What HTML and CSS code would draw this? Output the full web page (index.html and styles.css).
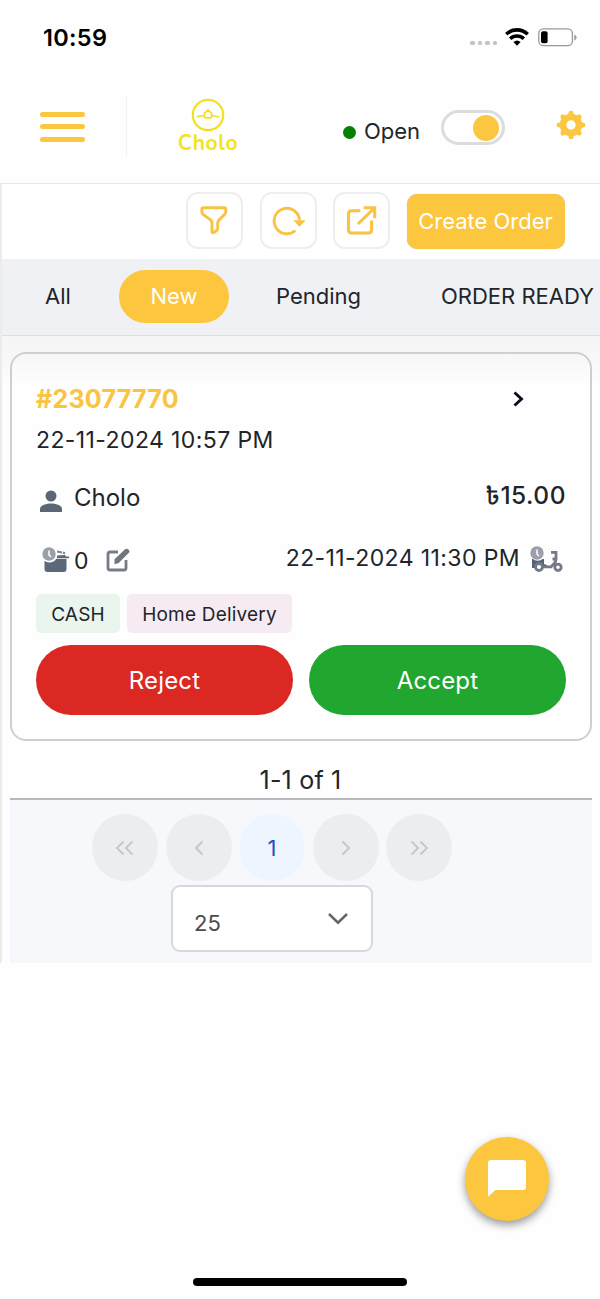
FILE: index.html
```html
<!DOCTYPE html>
<html lang="en">
<head>
<meta charset="utf-8">
<title>Cholo orders</title>
<link rel="stylesheet" href="styles.css">
</head>
<body>
<div class="statusbar">
  <span class="clock">10:59</span>
  <span class="cell"><i></i><i></i><i></i><i></i></span>
  <svg class="wifi" width="24" height="18" viewBox="0 0 24 18"><g fill="none" stroke="#000" stroke-width="3.6"><path d="M1.300 6.200a15.500 15.500 0 0 1 21.400 0"/><path d="M5.200 10.700a9.800 9.800 0 0 1 13.600 0"/></g><path d="M8.400 14a5.400 5.400 0 0 1 7.200 0L12 17.700z"/></svg>
  <svg class="battery" width="40" height="19" viewBox="0 0 40 19"><rect x=".8" y=".8" width="33.600" height="16.800" rx="4.600" fill="none" stroke="#999" stroke-width="1.300"/><rect x="3" y="3.200" width="6.600" height="12" rx="2"/><path d="M36.300 6.400q2.300.8 2.300 3t-2.300 3z" fill="#999"/></svg>
</div>
<header class="header">
  <div class="burger"><i></i><i></i><i></i></div>
  <div class="divider"></div>
  <div class="logo">
    <svg width="34" height="34" viewBox="0 0 34 34" fill="none" stroke="#f0e020" stroke-width="2.200"><circle cx="17" cy="17" r="15.200"/><path d="M6 19q3-1.800 7.200-1.100M20.800 17.900q3.800-.5 7.400 1.400" stroke-width="1.600"/><path d="M13.500 15.100l3.500-3.200 3.500 3.200v3.700q0 1-1 1h-5q-1 0-1-1z" stroke-width="1.700"/></svg>
    <span>Cholo</span>
  </div>
  <div class="state"><i></i><span>Open</span></div>
  <div class="toggle"><i></i></div>
  <svg class="gear" width="30" height="30" viewBox="0 0 30 30" fill="none" stroke="#fbc640"><circle cx="15" cy="15" r="8" stroke-width="6.600"/><path stroke-width="5" stroke-linecap="round" stroke-linejoin="round" d="M15 3.200v2M15 24.800v2M3.200 15h2M24.800 15h2M6.900 6.900l1.400 1.400M21.700 21.700l1.400 1.400M6.900 23.100l1.400-1.400M21.700 8.300l1.400-1.400"/></svg>
</header>
<main class="main">
  <div class="toolbar">
    <button class="tool"><svg width="32" height="32" viewBox="0 0 32 32" fill="none" stroke="#f9c242" stroke-width="2.900" stroke-linejoin="round"><path d="M5.300 2.800h21q1.500 0 1.500 1.500v3q0 1-1 2l-5.700 5.600q-1.400 1.400-1.400 3.200v5.500q0 1.200-1 1.900l-3 2q-1.700 1-1.700-1v-8.400q0-1.800-1.400-3.200L4.900 9.300q-1-1-1-2v-3q0-1.500 1.400-1.500z"/></svg></button>
    <button class="tool"><svg width="34" height="32" viewBox="0 0 34 32"><path d="M24.300 25.500A12.700 12.700 0 1 1 28.500 15" fill="none" stroke="#f9c242" stroke-width="2.800"/><path d="M22.200 15.200h12.600l-6.300 6.500z" fill="#f9c242"/></svg></button>
    <button class="tool"><svg width="32" height="32" viewBox="0 0 32 32" fill="none" stroke="#f9c242" stroke-width="3.100"><path d="M15.300 5.700H6.700q-3.200 0-3.200 3.200v15.900q0 3.200 3.200 3.200h16.700q3.200 0 3.200-3.200V15.500M13 19L29 3.300M18.700 2.700h11v10.500"/></svg></button>
    <button class="create"><span>Create Order</span></button>
  </div>
  <nav class="tabs"><span class="tab all">All</span><span class="tab active">New</span><span class="tab pending">Pending</span><span class="tab ready">ORDER READY</span></nav>
  <section class="content">
    <article class="card">
      <div class="row title"><b>#23077770</b><svg width="12" height="18" viewBox="0 0 12 18"><path d="M1.500 2.500L8.500 9l-7 6.500" fill="none" stroke="#0c0c20" stroke-width="2.900"/></svg></div>
      <div class="date">22-11-2024 10:57 PM</div>
      <div class="row customer">
        <svg width="22" height="23" viewBox="0 0 22 23" fill="#5c6675"><circle cx="11" cy="6" r="5.500"/><path d="M0 22v-3c0-4 7-5.500 11-5.500S22 15 22 19v3z"/></svg>
        <span class="name">Cholo</span><span class="price"><span class="taka">৳</span>15.00</span>
      </div>
      <div class="row schedule">
        <svg width="28" height="26" viewBox="0 0 28 26"><path d="M2.500 12h22v10q0 3-3 3h-16q-3 0-3-3zM14 8.500l9-.5 1 1.500h3v1.700H14z" fill="#5c6878"/><path d="M15 4.500l5 1M21 5.500l2 1" stroke="#7c8592" stroke-width="2"/><circle cx="7.500" cy="7.500" r="8" fill="#fff"/><circle cx="7" cy="7" r="6.700" fill="#9aa0aa"/><path d="M7 3.500V8l2 2" fill="none" stroke="#fff" stroke-width="1.500"/></svg>
        <span class="count">0</span>
        <svg class="edit" width="24" height="24" viewBox="0 0 24 24"><path d="M12 4H4Q2 4 2 6v14q0 2 2 2h14q2 0 2-2v-8" fill="none" stroke="#767c86" stroke-width="2.800"/><path d="M8.500 16.200v-5L18.800 1.500q2-1.700 3.700 0t.1 3.600L12.700 15z" fill="#707680"/></svg>
        <span class="due">22-11-2024 11:30 PM</span>
        <svg class="scooter" width="34" height="27" viewBox="0 0 34 27"><path d="M2 13h12v5l3 1v3H2z" fill="#566171"/><g fill="none" stroke="#727987" stroke-width="2.800"><path d="M21 6.300h5v7q0 2.500-2 4.500l-3 3H14M22.500 13H26"/><circle cx="9" cy="21" r="3.500" fill="#fff"/><circle cx="28" cy="21.300" r="3.200" fill="#fff"/></g><circle cx="7.800" cy="7" r="7.800" fill="#fff"/><circle cx="7" cy="7" r="6.700" fill="#9aa0aa"/><path d="M7 3.500V8l2 2" fill="none" stroke="#fff" stroke-width="1.500"/></svg>
      </div>
      <div class="tags"><span class="tag cash">CASH</span><span class="tag home">Home Delivery</span></div>
      <div class="actions"><button class="reject">Reject</button><button class="accept">Accept</button></div>
    </article>
    <div class="range">1-1 of 1</div>
    <div class="pager">
      <div class="pages">
        <span class="page"><svg width="20" height="16" viewBox="0 0 20 16"><path d="M8.500 1.500L2 8l6.500 6.500M17.500 1.500L11 8l6.500 6.500"/></svg></span>
        <span class="page"><svg width="10" height="16" viewBox="0 0 10 16"><path d="M8.500 1.500L2 8l6.500 6.500"/></svg></span>
        <span class="page current">1</span>
        <span class="page"><svg width="10" height="16" viewBox="0 0 10 16"><path d="M1.500 1.500L8 8l-6.500 6.500"/></svg></span>
        <span class="page"><svg width="20" height="16" viewBox="0 0 20 16"><path d="M2.500 1.500L9 8l-6.500 6.500M11.500 1.500L18 8l-6.500 6.500"/></svg></span>
      </div>
      <div class="size"><span>25</span><svg width="22" height="14" viewBox="0 0 22 14"><path d="M2 2l9 8.700L20 2" fill="none" stroke="#666" stroke-width="2.500"/></svg></div>
    </div>
  </section>
</main>
<div class="chat"><svg width="38" height="37" viewBox="0 0 38 37"><path d="M3 0h32q3 0 3 3v24q0 3-3 3H7.500L0 36.800V3q0-3 3-3z" fill="#fff"/></svg></div>
<div class="homebar"></div>
</body>
</html>
```
FILE: styles.css
```css
* { box-sizing: border-box; }
body { margin: 0; width: 600px; height: 1299px; position: relative; overflow: hidden; background: #fefefe; color: #212529; font-family: Inter, "Liberation Sans", sans-serif; font-size: 22px; }
button { border: 0; padding: 0; font: inherit; display: flex; align-items: center; justify-content: center; }
svg { display: block; flex: none; }
i { display: block; }
.statusbar { height: 75px; padding-left: 43px; display: flex; align-items: center; color: #000; }
.clock { font-size: 23.500px; font-weight: 600; width: 427px; letter-spacing: .3px; }
.cell { display: flex; gap: 3px; width: 35px; padding-top: 11px; }
.cell i { width: 4.500px; height: 4.500px; border-radius: 1.500px; background: #c5c5c5; }
.wifi { margin-top: -2px; }
.battery { margin-left: 9px; }
.header { height: 109px; border-bottom: 1px solid #e6e6e6; display: flex; align-items: flex-start; padding-left: 40px; }
.burger { width: 45px; margin-top: 36.500px; display: grid; gap: 7.500px; }
.burger i { height: 5px; border-radius: 3px; background: #fbc640; }
.divider { width: 1px; height: 61px; margin: 21px 51px 0 41px; background: #f1f1f1; }
.logo { width: 60px; margin-top: 23px; display: flex; flex-direction: column; align-items: center; }
.logo span { font: 700 21px/24px "Nunito", "Noto Sans", sans-serif; color: #f2e324; letter-spacing: .6px; margin-top: -1px; }
.state { margin: 42px 0 0 105px; width: 98px; display: flex; align-items: center; gap: 8px; line-height: 28px; font-size: 22px; }
.state i { width: 13px; height: 13px; margin-top: 2px; border-radius: 50%; background: #058005; }
.toggle { width: 64px; height: 35px; margin-top: 35px; border: 3px solid #dcdcdc; border-radius: 18px; padding: 1.500px 0 0 28.500px; }
.toggle i { width: 26px; height: 26px; border-radius: 50%; background: #fbc640; }
.gear { margin: 35px 0 0 51px; }
.main { border-left: 2px solid #ececec; height: 779px; }
.toolbar { height: 75px; display: flex; align-items: flex-start; padding: 8px 0 0 184px; gap: 16.500px; background: #fff; }
.tool { width: 57px; height: 57px; background: #fff; border: 2px solid #eee; border-radius: 12px; padding-right: 1px; }
.create { width: 158px; height: 55px; margin-top: 1.500px; border-radius: 10px; background: #fcc63e; color: #fff; font-size: 22px; box-shadow: 0 0 1px #bbb; padding-bottom: 1px; }
.tabs { height: 77px; display: flex; align-items: center; padding-bottom: 3px; background: #eff1f5; border-bottom: 1px solid #dcdee1; white-space: nowrap; overflow: hidden; }
.tab { flex: none; }
.all { width: 117px; padding-left: 43px; }
.active { width: 110px; height: 53px; line-height: 53px; margin-top: 2px; text-align: center; border-radius: 27px; color: #fff; background: #fcc63e; }
.pending { width: 212px; padding-left: 47px; }
.content { padding: 16px 9px 0 8px; height: 627px; background: linear-gradient(#f5f5f5, #f8f8f8 25px, #fefefe 50px); }
.card { width: 582px; height: 389px; border: 2px solid #cfcfcf; border-radius: 16px; padding: 28px 24px 0 24px; }
.row { display: flex; align-items: center; }
.title { height: 34px; justify-content: space-between; padding-right: 41px; }
.title b { color: #fac440; font-size: 25px; font-weight: 700; letter-spacing: .25px; }
.date { line-height: 30px; margin-top: 8.500px; }
.date, .due { font-size: 23px; letter-spacing: .4px; }
.customer { height: 34px; margin-top: 25.500px; padding-left: 4px; }
.customer svg { margin-top: 8px; }
.name { margin-left: 12px; font-size: 24px; }
.price { margin-left: auto; font-size: 24.500px; font-weight: 500; margin-top: -1px; letter-spacing: .5px; }
.taka { font-family: "Noto Sans Bengali", "Noto Sans", sans-serif; }
.schedule { height: 34px; margin-top: 29px; padding-left: 6px; }
.count { margin: 2px 0 0 4px; font-size: 23px; }
.edit { margin-left: 17px; }
.due { margin-left: auto; margin-top: -5px; }
.scooter { margin: -2px 2px 0 10px; }
.tags { display: flex; gap: 7px; margin-top: 17px; font-size: 19px; letter-spacing: .2px; }
.tag { height: 39px; line-height: 41px; border-radius: 5px; text-align: center; }
.cash { width: 84px; background: #eaf5ee; }
.home { width: 165px; background: #f6ebf2; }
.actions { display: flex; gap: 16px; margin-top: 12px; width: 530px; }
.actions button { flex: 1; height: 70px; border-radius: 35px; color: #fff; font-size: 24px; letter-spacing: .15px; }
.reject { background: #dc2822; }
.accept { background: #21a62f; }
.range { height: 57px; line-height: 30px; padding-top: 24px; text-align: center; font-size: 25px; letter-spacing: .2px; }
.pager { width: 582px; height: 165px; border-top: 2px solid #b7b8bb; background: #f6f8fc; }
.pages { display: flex; gap: 7.500px; padding: 14px 0 0 82px; }
.page { width: 66px; height: 67px; border-radius: 50%; background: #ecedef; display: flex; align-items: center; justify-content: center; }
.page path { fill: none; stroke: #c8c8ca; stroke-width: 2; }
.current { background: #eff5ff; color: #2450c5; }
.size { width: 202px; height: 67px; margin: 4px 0 0 161px; border: 2px solid #d6d8dd; border-radius: 9px; background: #fff; display: flex; justify-content: space-between; padding: 20px 22px 0 21px; color: #4b4b4d; line-height: 32px; }
.size svg { margin-top: 5px; }
.chat { position: absolute; left: 465px; top: 1137px; width: 84px; height: 84px; padding-bottom: 2px; border-radius: 50%; background: #fcc63e; display: flex; align-items: center; justify-content: center; box-shadow: 0 4px 9px #0006; }
.homebar { position: absolute; left: 193px; top: 1278px; width: 214px; height: 8px; border-radius: 4px; background: #000; }
```
